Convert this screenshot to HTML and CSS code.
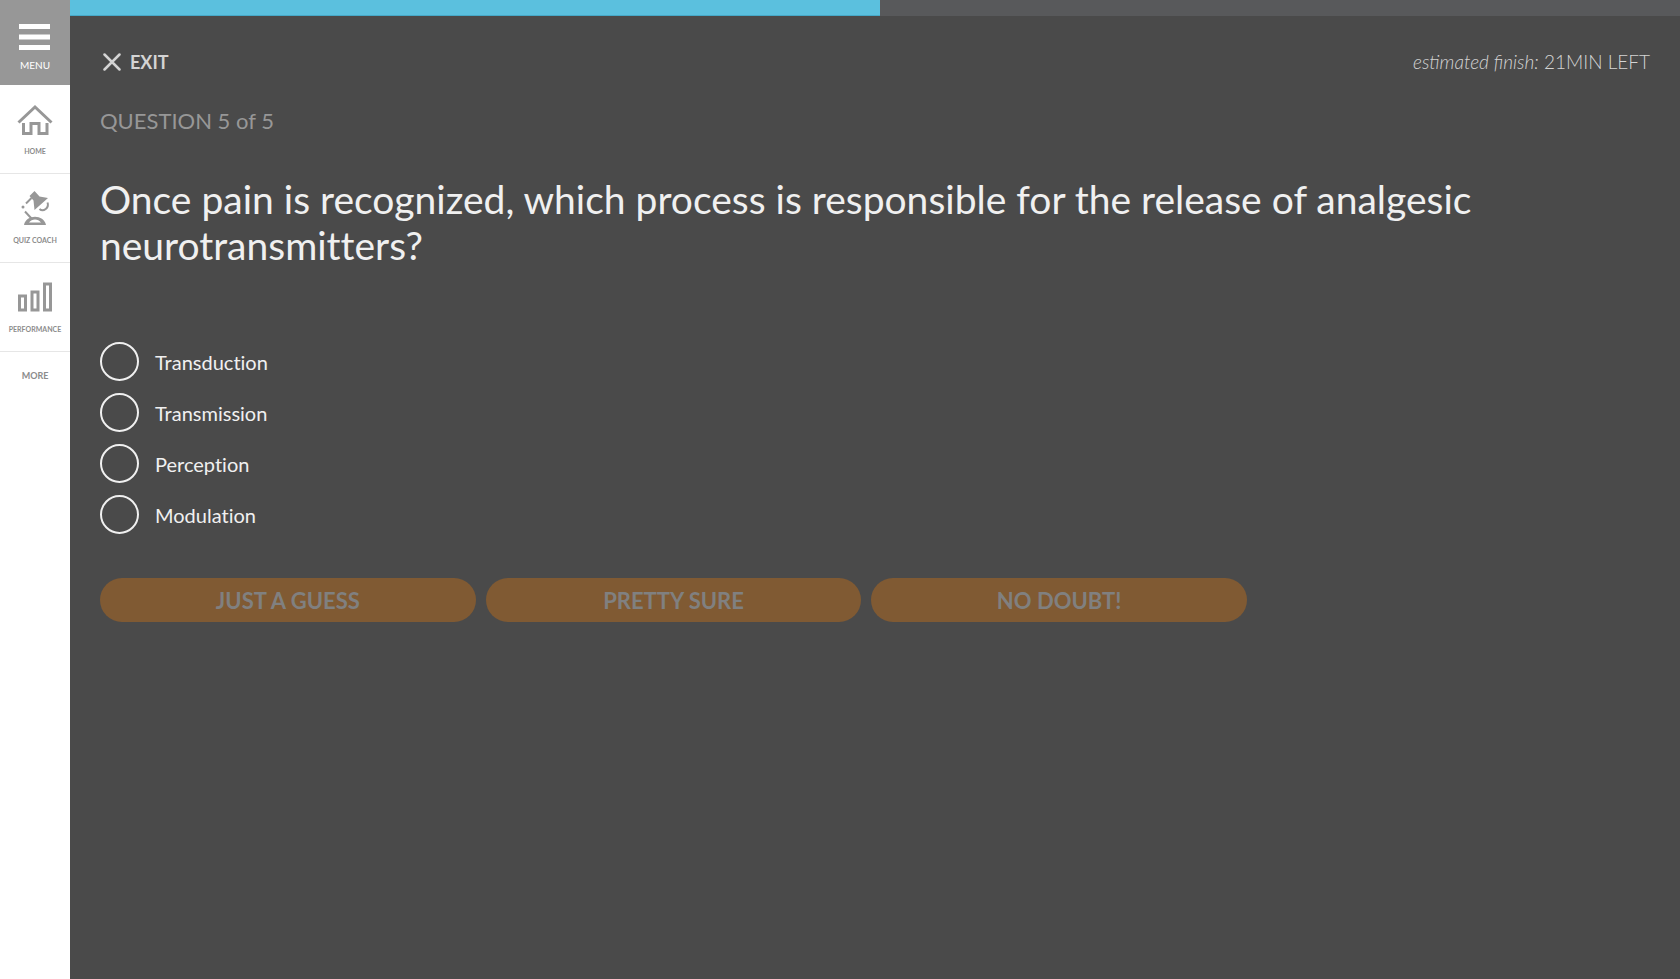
FILE: index.html
```html
<!DOCTYPE html>
<html lang="en">
<head>
<meta charset="utf-8">
<title>Quiz</title>
<link rel="stylesheet" href="styles.css">
</head>
<body>
<div class="app">
  <nav class="sidebar" aria-label="Main">
    <button class="menu" type="button">
      <svg width="32" height="26" viewBox="0 0 32 26" fill="#fff" aria-hidden="true"><path d="M0 0h31v5H0zM0 10.500h31v5H0zM0 21h31v5H0z"/></svg>
      <span>MENU</span>
    </button>
    <a class="nav-item" href="#home">
      <svg width="36" height="34" viewBox="0 0 36 34" fill="none" stroke="#979797" stroke-width="3" aria-hidden="true"><path d="M1.500 20.500L18 5l16.500 15.500"/><path d="M6.500 21v10.500H14V21.500h8v10h8V21"/></svg>
      <span>HOME</span>
    </a>
    <a class="nav-item" href="#coach">
      <svg width="36" height="34" viewBox="0 0 36 34" fill="none" stroke="#979797" stroke-width="2" aria-hidden="true"><path fill="#979797" stroke="none" d="M17.500 0l5 5.500 8.500 1.500-13.500 12L16.500 9.500 12.500 5z"/><path d="M14.500 7L9 12.500M8 20.500l6.500 7"/><path d="M30.500 11.500c2 5-4 10-8 6.500"/><circle cx="6" cy="16" r="1.500" fill="#979797" stroke="none"/><path fill="#979797" fill-rule="evenodd" stroke="none" d="M7 34c2-11 20-11 22 0zM12 31.500h12c-3-4-9-4-12 0z"/></svg>
      <span>QUIZ COACH</span>
    </a>
    <a class="nav-item" href="#performance">
      <svg width="36" height="34" viewBox="0 0 36 34" fill="none" stroke="#979797" stroke-width="3" aria-hidden="true"><path d="M2.500 16h6v14h-6zM15 12h6v18h-6zM27.500 4h6v26h-6z"/></svg>
      <span>PERFORMANCE</span>
    </a>
    <a class="more" href="#more">MORE</a>
  </nav>
  <main class="main">
    <div class="progress" role="progressbar" aria-label="Quiz progress" aria-valuenow="50"><div class="progress-fill" style="width:50.300%"></div></div>
    <div class="content">
      <header class="top">
        <button class="exit" type="button"><svg width="18" height="18" viewBox="0 0 18 18" stroke="#d4d4d4" stroke-width="2.500" stroke-linecap="round" aria-hidden="true"><path d="M1.500 1.500l15 15M16.500 1.500l-15 15"/></svg>EXIT</button>
        <p class="estimate"><em>estimated finish:</em> 21MIN LEFT</p>
      </header>
      <p class="counter">QUESTION 5 of 5</p>
      <h1 class="question">Once pain is recognized, which process is responsible for the release of analgesic neurotransmitters?</h1>
      <form>
        <div class="answers" role="radiogroup" aria-label="Answers">
          <label class="answer"><input type="radio" name="answer">Transduction</label>
          <label class="answer"><input type="radio" name="answer">Transmission</label>
          <label class="answer"><input type="radio" name="answer">Perception</label>
          <label class="answer"><input type="radio" name="answer">Modulation</label>
        </div>
        <div class="actions">
          <button class="confidence" type="button" disabled>JUST A GUESS</button>
          <button class="confidence" type="button" disabled>PRETTY SURE</button>
          <button class="confidence" type="button" disabled>NO DOUBT!</button>
        </div>
      </form>
    </div>
  </main>
</div>
</body>
</html>
```
FILE: styles.css
```css
* { box-sizing: border-box; }
body { margin: 0; background: #4a4a4a; color: #f0f0f0; font-family: Lato, "Open Sans", sans-serif; }
button { border: 0; padding: 0; background: none; color: inherit; font: inherit; }
a { color: inherit; text-decoration: none; }
p, h1 { margin: 0; }
.app { display: flex; min-height: 100vh; }
.sidebar { flex: 0 0 70px; background: #fff; color: #8c8c8c; font-weight: 700; text-align: center; }
.menu { display: flex; flex-direction: column; align-items: center; gap: 7px; width: 100%; height: 85px; padding-top: 24px; background: #979797; color: #fff; font-size: 10px; font-weight: 400; line-height: 16px; }
.nav-item { display: flex; flex-direction: column; align-items: center; gap: 7px; padding-top: 17px; height: 89px; border-bottom: 1px solid #e6e6e6; font-size: 7px; line-height: 16px; }
.more { display: block; padding-top: 16px; font-size: 9px; line-height: 16px; }
.main { flex: 1; min-width: 0; }
.progress { height: 16px; background: #58595b; }
.progress-fill { height: 100%; background: #5bc0de; border-bottom: 1px solid #46a9c8; }
.content { padding: 32px 30px; }
.top { display: flex; justify-content: space-between; align-items: center; height: 28px; color: #d4d4d4; font-size: 19px; }
.exit { display: flex; align-items: center; gap: 9px; padding-left: 3px; font-size: 18px; font-weight: 700; line-height: 28px; }
.estimate { font-weight: 300; line-height: 28px; }
.counter { margin-top: 31px; color: #979797; font-size: 22px; line-height: 28px; }
.question { margin-top: 41px; font-size: 39px; font-weight: 400; line-height: 46px; font-variant-ligatures: none; }
.answers { display: flex; flex-direction: column; gap: 12px; margin-top: 74px; font-variant-ligatures: none; }
.answer { display: flex; align-items: center; gap: 16px; font-size: 20px; line-height: 24px; }
.answer input { appearance: none; flex: none; width: 39px; height: 39px; margin: 0; border: 2px solid #f0f0f0; border-radius: 50%; }
.actions { display: grid; grid-template-columns: repeat(3, 1fr); gap: 10px; width: 74%; margin-top: 44px; }
.confidence { height: 44px; border-radius: 22px; background: #805a33; color: #808080; font-size: 22px; font-weight: 700; }
```
